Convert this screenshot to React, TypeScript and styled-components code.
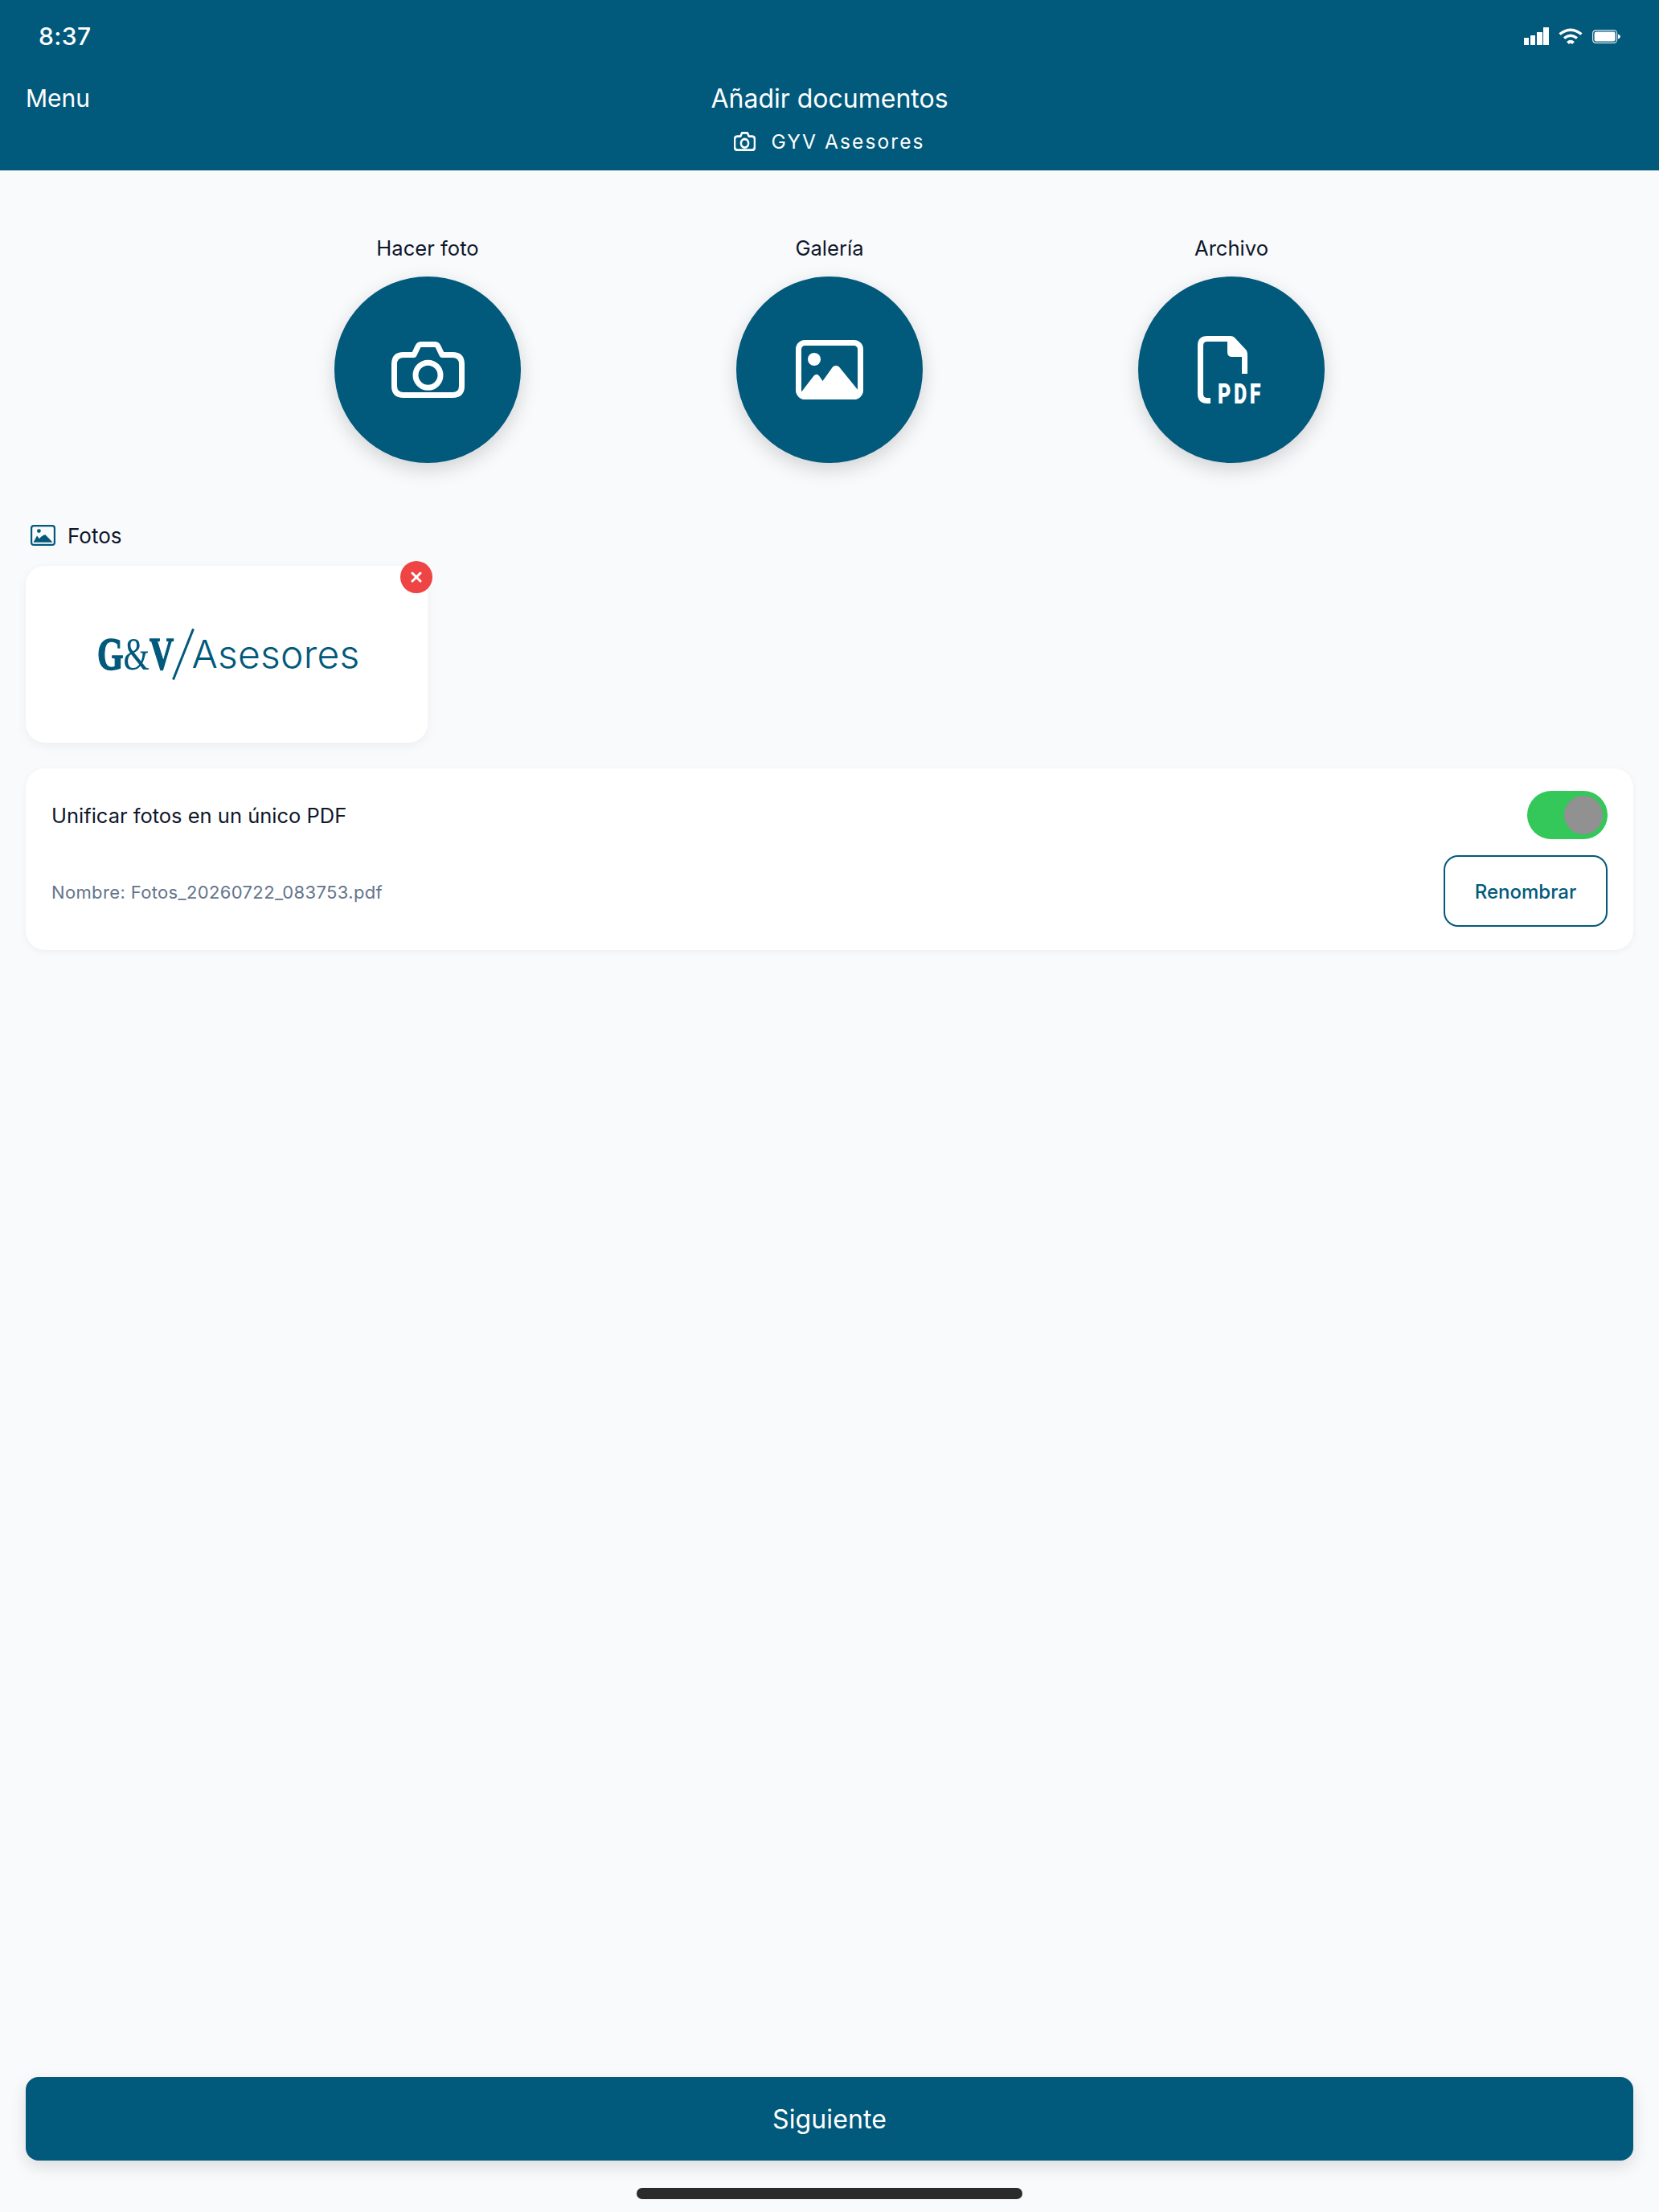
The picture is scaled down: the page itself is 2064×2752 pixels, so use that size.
import { X } from 'lucide-react'
import styled, { createGlobalStyle } from 'styled-components'

const primary = '#01597c'

const GlobalStyle = createGlobalStyle`
  html, body {
    margin: 0;
    padding: 0;
    background: #f9fafc;
  }
  * {
    box-sizing: border-box;
  }
  body {
    font-family: Inter, "Liberation Sans", sans-serif;
    color: #0f172a;
  }
`

const CameraIcon = ({ width, height, stroke }: { width: number; height: number; stroke: number }) => (
  <svg
    width={width}
    height={height}
    viewBox="0 0 91 70"
    preserveAspectRatio="none"
    fill="none"
    stroke="#fff"
    strokeWidth={stroke}
    strokeLinejoin="round"
  >
    <path d="M28 16.5 L33 6 Q34.5 3.5 37 3.5 H54 Q56.5 3.5 58 6 L63 16.5 H76 Q87.5 16.5 87.5 28 V55 Q87.5 66.5 76 66.5 H15 Q3.5 66.5 3.5 55 V28 Q3.5 16.5 15 16.5 Z" />
    <circle cx="45.5" cy="41.7" r="15.5" />
  </svg>
)

const GalleryIcon = () => (
  <svg width="84" height="74" viewBox="0 0 84 74" fill="none">
    <rect x="3.5" y="3.5" width="77" height="67" rx="8" stroke="#fff" strokeWidth="7" />
    <circle cx="23" cy="24" r="8" fill="#fff" />
    <path d="M6 66 L22.5 44.5 Q26 41 29 44.5 L33.5 51 L46 33.5 Q50 30 54 33.5 L78 63 V68 H6 Z" fill="#fff" />
  </svg>
)

const PhotosIcon = () => (
  <svg width="31" height="26" viewBox="0 0 31 26" fill="none">
    <rect x="1.1" y="1.1" width="28.8" height="23.8" rx="3" stroke={primary} strokeWidth="2.2" />
    <circle cx="10.4" cy="7.6" r="2.4" fill={primary} />
    <path d="M3.5 21.8 L8 13.4 L11 17.2 Q14 13 18.4 12.2 L27.6 21.8 Z" fill={primary} />
  </svg>
)

const PdfIcon = () => (
  <PdfSvg viewBox="0 0 84 94" fill="#fff">
    <path d="M16 84 H12 Q0 84 0 72 V12 Q0 0 12 0 H41 Q44 0 46 2 L60 17 Q62 19 62 24 V47 H55 V26 H43 Q37 26 37 20 V7 H12 Q7 7 7 12 V72 Q7 77 12 77 H16 Z" />
    <PdfLetters
      transform="translate(25 83.5) scale(0.7 1)"
      fontSize="36"
      letterSpacing="5"
    >
      PDF
    </PdfLetters>
  </PdfSvg>
)

const SignalIcon = () => (
  <svg width="31" height="22" viewBox="0 0 31 22" fill="#fff">
    <rect x="0" y="13" width="6" height="9" />
    <rect x="8" y="10" width="6" height="12" />
    <rect x="16" y="6" width="7" height="16" />
    <rect x="24" y="0" width="7" height="22" />
  </svg>
)

const WifiIcon = () => (
  <svg width="30" height="20" viewBox="0 0 30 20" fill="none" stroke="#fff" strokeWidth="3.4">
    <path d="M1.5 7.5 Q15 -3 28.5 7.5" />
    <path d="M7 12.5 Q15 6 23 12.5" />
    <path d="M11.5 18.5 Q15 15 18.5 18.5" strokeWidth="4" />
  </svg>
)

const BatteryIcon = () => (
  <svg width="35" height="17" viewBox="0 0 35 17" fill="none">
    <rect x="0.6" y="0.6" width="30" height="15.8" rx="3.8" stroke="#fff" strokeOpacity="0.85" strokeWidth="1.2" />
    <rect x="2.6" y="2.6" width="26" height="11.8" rx="2.2" fill="#fff" />
    <path d="M32 5.5 Q35 6.5 35 8.5 Q35 10.5 32 11.5 Z" fill="#fff" />
  </svg>
)

const App = () => {
  return (
    <Page>
      <GlobalStyle />
      <Header>
        <StatusBar>
          <Time>8:37</Time>
          <StatusIcons>
            <SignalIcon />
            <WifiIcon />
            <BatteryIcon />
          </StatusIcons>
        </StatusBar>
        <NavRow>
          <MenuLink>Menu</MenuLink>
          <Title>Añadir documentos</Title>
        </NavRow>
        <Subtitle>
          <CameraIcon width={27} height={24} stroke={8.5} />
          <span>GYV Asesores</span>
        </Subtitle>
      </Header>

      <Main>
        <Actions>
          <Action>
            <ActionLabel>Hacer foto</ActionLabel>
            <ActionCircle>
              <CameraIcon width={91} height={70} stroke={7} />
            </ActionCircle>
          </Action>
          <Action>
            <ActionLabel>Galería</ActionLabel>
            <ActionCircle>
              <GalleryIcon />
            </ActionCircle>
          </Action>
          <Action>
            <ActionLabel>Archivo</ActionLabel>
            <ActionCircle>
              <PdfIcon />
            </ActionCircle>
          </Action>
        </Actions>

        <SectionTitle>
          <PhotosIcon />
          <span>Fotos</span>
        </SectionTitle>

        <PhotoCard>
          <Logo>
            <LogoMark>
              G<LogoAmp>&amp;</LogoAmp>V
            </LogoMark>
            <LogoSlash viewBox="0 0 28 64" fill="none" stroke={primary} strokeWidth="3">
              <path d="M26.5 0.5 L1.5 63.5" />
            </LogoSlash>
            <LogoWord>Asesores</LogoWord>
          </Logo>
          <RemoveButton>
            <X size={20} strokeWidth={3.6} color="#fff" />
          </RemoveButton>
        </PhotoCard>

        <OptionCard>
          <OptionRow>
            <OptionLabel>Unificar fotos en un único PDF</OptionLabel>
            <Toggle>
              <Thumb />
            </Toggle>
          </OptionRow>
          <OptionRow>
            <FileName>Nombre: Fotos_20260722_083753.pdf</FileName>
            <RenameButton>Renombrar</RenameButton>
          </OptionRow>
        </OptionCard>
      </Main>

      <Footer>
        <NextButton>Siguiente</NextButton>
        <HomeIndicator />
      </Footer>
    </Page>
  )
}

export default App

const Page = styled.div`
  display: flex;
  flex-direction: column;
  height: 2752px;
  overflow: hidden;
  background: #f9fafc;
`

const Header = styled.header`
  height: 212px;
  background: ${primary};
  color: #fff;
`

const StatusBar = styled.div`
  display: flex;
  justify-content: space-between;
  align-items: center;
  height: 90px;
  padding: 0 48px;
`

const Time = styled.div`
  font-size: 30px;
  font-weight: 500;
  letter-spacing: 0.4px;
`

const StatusIcons = styled.div`
  display: flex;
  align-items: center;
  gap: 12px;
`

const NavRow = styled.div`
  display: grid;
  grid-template-columns: 1fr auto 1fr;
  align-items: center;
  height: 44px;
  margin-top: 10px;
  padding: 0 32px;
`

const MenuLink = styled.div`
  font-size: 30px;
`

const Title = styled.div`
  font-size: 32px;
`

const Subtitle = styled.div`
  display: flex;
  justify-content: center;
  align-items: center;
  gap: 19px;
  height: 32px;
  margin-top: 16px;
  font-size: 24.5px;
  letter-spacing: 2.1px;
`

const Main = styled.main`
  padding: 0 32px;
`

const Actions = styled.div`
  display: grid;
  grid-template-columns: repeat(3, 500px);
  justify-content: center;
  margin-top: 81px;
`

const Action = styled.div`
  display: flex;
  flex-direction: column;
  align-items: center;
  gap: 19px;
`

const ActionLabel = styled.div`
  font-size: 25.6px;
  line-height: 32px;
`

const ActionCircle = styled.div`
  display: flex;
  justify-content: center;
  align-items: center;
  width: 232px;
  height: 232px;
  border-radius: 50%;
  background: ${primary};
  box-shadow: 0 8px 24px rgba(0, 0, 0, 0.16);
`

const PdfSvg = styled.svg`
  width: 84px;
  height: 94px;
  margin-top: 10px;
`

const PdfLetters = styled.text`
  font-family: Roboto, sans-serif;
  font-weight: 900;
`

const SectionTitle = styled.div`
  display: flex;
  align-items: center;
  gap: 15px;
  height: 32px;
  margin-top: 74px;
  padding-left: 6px;
  font-size: 26px;
`

const PhotoCard = styled.div`
  position: relative;
  display: flex;
  justify-content: center;
  align-items: center;
  width: 500px;
  height: 220px;
  margin-top: 22px;
  padding-left: 4px;
  border-radius: 24px;
  background: #fff;
  box-shadow: 0 4px 14px rgba(0, 0, 0, 0.05);
`

const Logo = styled.div`
  display: flex;
  align-items: center;
  color: ${primary};
`

const LogoMark = styled.div`
  width: 96px;
  font-family: "Liberation Serif", serif;
  font-size: 58px;
  font-weight: 700;
  line-height: 64px;
  white-space: nowrap;
  -webkit-text-stroke: 1.6px ${primary};
  transform: scaleX(0.72);
  transform-origin: left center;
`

const LogoAmp = styled.span`
  font-weight: 400;
  -webkit-text-stroke: 0;
`

const LogoSlash = styled.svg`
  width: 28px;
  height: 64px;
  margin-left: -3px;
`

const LogoWord = styled.div`
  margin-left: -3px;
  font-size: 48px;
  font-weight: 300;
  letter-spacing: 0.2px;
  line-height: 64px;
`

const RemoveButton = styled.div`
  position: absolute;
  top: -6px;
  right: -6px;
  display: flex;
  justify-content: center;
  align-items: center;
  width: 40px;
  height: 40px;
  border-radius: 50%;
  background: #ef4444;
`

const OptionCard = styled.section`
  display: flex;
  flex-direction: column;
  gap: 20px;
  margin-top: 32px;
  padding: 28px 32px 29px;
  border-radius: 24px;
  background: #fff;
  box-shadow: 0 2px 8px rgba(0, 0, 0, 0.05);
`

const OptionRow = styled.div`
  display: flex;
  justify-content: space-between;
  align-items: center;
`

const OptionLabel = styled.div`
  font-size: 25.5px;
`

const Toggle = styled.div`
  display: flex;
  justify-content: flex-end;
  align-items: center;
  width: 100px;
  height: 60px;
  padding-right: 6px;
  border-radius: 30px;
  background: #34c759;
`

const Thumb = styled.div`
  width: 48px;
  height: 48px;
  border-radius: 50%;
  background: #919191;
`

const FileName = styled.div`
  padding-top: 2px;
  font-size: 22px;
  letter-spacing: 0.36px;
  color: #64748b;
`

const RenameButton = styled.div`
  display: flex;
  justify-content: center;
  align-items: center;
  width: 204px;
  height: 89px;
  padding-top: 1px;
  border: 2px solid ${primary};
  border-radius: 18px;
  font-size: 24px;
  font-weight: 500;
  color: ${primary};
`

const Footer = styled.footer`
  display: flex;
  flex-direction: column;
  align-items: center;
  margin-top: auto;
  padding: 0 32px 16px;
`

const NextButton = styled.div`
  display: flex;
  justify-content: center;
  align-items: center;
  width: 100%;
  height: 104px;
  border-radius: 16px;
  background: ${primary};
  color: #fff;
  font-size: 32px;
  letter-spacing: 0.1px;
  box-shadow: 0 8px 20px rgba(0, 0, 0, 0.12);
`

const HomeIndicator = styled.div`
  width: 480px;
  height: 14px;
  margin-top: 34px;
  border-radius: 7px;
  background: #2a2b2a;
`
